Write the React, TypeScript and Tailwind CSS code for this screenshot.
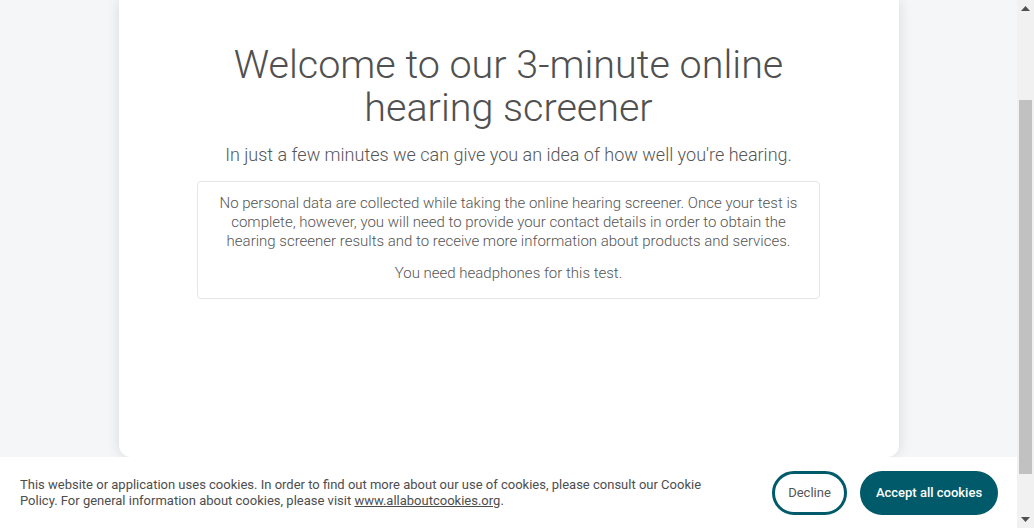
import React from 'react';

const App: React.FC = () => {
  return (
    <div className="flex h-[528px] w-[1034px] overflow-hidden bg-[#f5f6f8] font-['Roboto',sans-serif]">
      <div className="flex flex-1 flex-col">
        {/* Screener card */}
        <div className="flex flex-1 justify-center">
          <div className="flex h-[457px] w-[780px] flex-col items-center rounded-b-xl bg-white pt-[43px] shadow-[0_0_14px_rgba(0,0,0,0.12)]">
            <h1 className="w-[600px] text-center text-[39.5px] font-light leading-[43px] text-[#505050]">
              Welcome to our 3-minute online hearing screener
            </h1>
            <p className="mt-[14px] text-center text-[18px] font-light leading-[24px] text-[#555555]">
              In just a few minutes we can give you an idea of how well you're hearing.
            </p>
            <div className="mt-[14px] w-[623px] rounded border border-[#e6e6e6] px-5 pb-[15px] pt-[12px] text-center text-[15px] font-light leading-[19px] text-[#555555]">
              <p>
                No personal data are collected while taking the online hearing screener. Once your test is complete, however, you will need to provide your contact details in order to obtain the hearing screener results and to receive more information about products and services.
              </p>
              <p className="mt-[13px]">You need headphones for this test.</p>
            </div>
          </div>
        </div>

        {/* Cookie bar */}
        <div className="flex h-[71px] items-center bg-white pl-5 pr-[19px]">
          <p className="w-[700px] text-[13px] leading-[16px] text-[#4d4d4d]">
            This website or application uses cookies. In order to find out more about our use of cookies, please consult our Cookie Policy. For general information about cookies, please visit <a className="underline" href="#">www.allaboutcookies.org</a>.
          </p>
          <div className="ml-auto flex gap-[13px]">
            <button className="h-[44px] w-[75px] rounded-full border-[3px] border-[#005a69] text-[13px] text-[#555555]">
              Decline
            </button>
            <button className="h-[44px] w-[138px] rounded-full bg-[#005a69] text-[13px] font-medium text-white">
              Accept all cookies
            </button>
          </div>
        </div>
      </div>

      {/* Scrollbar */}
      <div className="flex w-[17px] flex-col items-center bg-[#f1f1f1]">
        <div className="flex h-[17px] items-center justify-center">
          <svg width="9" height="5" viewBox="0 0 9 5"><path d="M4.5 0L9 5H0z" fill="#505050" /></svg>
        </div>
        <div className="flex w-full flex-1 flex-col px-[2px]">
          <div className="h-[83px]" />
          <div className="h-[374px] bg-[#c1c1c1]" />
        </div>
        <div className="flex h-[17px] items-center justify-center">
          <svg width="9" height="5" viewBox="0 0 9 5"><path d="M0 0H9L4.5 5z" fill="#505050" /></svg>
        </div>
      </div>
    </div>
  );
};

export default App;
